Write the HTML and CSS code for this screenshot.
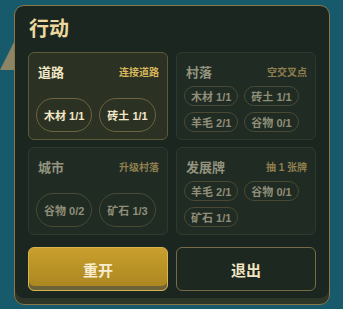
FILE: index.html
```html
<!DOCTYPE html>
<html lang="zh">
<head>
    <meta charset="UTF-8">
    <meta name="viewport" content="width=device-width, initial-scale=1.0">
    <title>行动</title>
    <link rel="stylesheet" href="styles.css">
</head>
<body>
    <div class="map-bit"></div>
    <div class="panel">
        <h1 class="title">行动</h1>
        <div class="grid">
            <div class="card active">
                <div class="card-head">
                    <span class="card-name">道路</span>
                    <span class="card-note">连接道路</span>
                </div>
                <div class="chips big">
                    <span class="chip">木材 1/1</span>
                    <span class="chip">砖土 1/1</span>
                </div>
            </div>
            <div class="card dim">
                <div class="card-head">
                    <span class="card-name">村落</span>
                    <span class="card-note">空交叉点</span>
                </div>
                <div class="chips">
                    <span class="chip">木材 1/1</span>
                    <span class="chip">砖土 1/1</span>
                    <span class="chip">羊毛 2/1</span>
                    <span class="chip">谷物 0/1</span>
                </div>
            </div>
            <div class="card dim">
                <div class="card-head">
                    <span class="card-name">城市</span>
                    <span class="card-note">升级村落</span>
                </div>
                <div class="chips big">
                    <span class="chip">谷物 0/2</span>
                    <span class="chip">矿石 1/3</span>
                </div>
            </div>
            <div class="card dim">
                <div class="card-head">
                    <span class="card-name">发展牌</span>
                    <span class="card-note">抽 1 张牌</span>
                </div>
                <div class="chips">
                    <span class="chip">羊毛 2/1</span>
                    <span class="chip">谷物 0/1</span>
                    <span class="chip">矿石 1/1</span>
                </div>
            </div>
        </div>
        <div class="buttons">
            <button class="btn gold">重开</button>
            <button class="btn dark">退出</button>
        </div>
    </div>
</body>
</html>
```

FILE: styles.css
```css
body {
    margin: 0;
    width: 343px;
    height: 309px;
    overflow: hidden;
    background-color: #165a6b;
    font-family: "Liberation Sans", "Noto Sans CJK SC", sans-serif;
    position: relative;
}
.map-bit {
    position: absolute;
    left: 0;
    top: 40px;
    width: 0;
    height: 0;
    border-right: 15px solid #8c8464;
    border-top: 30px solid transparent;
}
.panel {
    position: relative;
    margin: 5px 0 0 14px;
    width: 316px;
    height: 300px;
    box-sizing: border-box;
    border: 1px solid #8a7848;
    border-radius: 10px;
    background-color: #1b2620;
    box-shadow: inset 0 -6px 0 #2e3629;
    padding: 10px 13px 13px 13px;
}
.title {
    margin: 0 0 10px 1px;
    font-size: 20px;
    line-height: 26px;
    font-weight: bold;
    color: #ecd89e;
}
.grid {
    display: grid;
    grid-template-columns: 140px 140px;
    grid-template-rows: 88px 88px;
    column-gap: 8px;
    row-gap: 7px;
}
.card {
    box-sizing: border-box;
    border-radius: 6px;
    padding: 7px 7px 7px 6px;
    display: flex;
    flex-direction: column;
}
.card.active {
    background-color: #2b3224;
    border: 1px solid #5f5a3c;
}
.card.dim {
    background-color: #1f2b23;
    border: 1px solid #2f3a2e;
}
.card-head {
    display: flex;
    justify-content: space-between;
    align-items: center;
    padding: 2px 1px 0 3px;
    height: 18px;
}
.card-name {
    font-size: 13px;
    font-weight: bold;
    color: #f1e6c6;
}
.card-note {
    font-size: 10px;
    font-weight: bold;
    color: #d9b75a;
}
.dim .card-name {
    color: #94947e;
}
.dim .card-note {
    color: #8f7e4e;
}
.chips {
    display: flex;
    flex-wrap: wrap;
    gap: 6px 6px;
    margin-top: 6px;
    padding-left: 1px;
}
.chips.big {
    margin-top: auto;
    gap: 7px;
}
.chip {
    display: flex;
    align-items: center;
    justify-content: center;
    box-sizing: border-box;
    height: 20px;
    padding: 0 6px;
    border-radius: 10px;
    border: 1px solid #4a4a34;
    font-size: 11px;
    font-weight: bold;
    color: #908e78;
    white-space: nowrap;
}
.big .chip {
    height: 34px;
    border-radius: 17px;
    padding: 0 7px;
}
.active .chip {
    border-color: #6e6340;
    color: #f3e8c8;
}
.buttons {
    display: flex;
    gap: 8px;
    margin-top: 12px;
}
.btn {
    width: 140px;
    height: 44px;
    border-radius: 6px;
    font-family: "Liberation Sans", "Noto Sans CJK SC", sans-serif;
    font-size: 15px;
    font-weight: bold;
    cursor: pointer;
}
.btn.gold {
    background: linear-gradient(#c9a02e, #a9841f);
    border: 1px solid #d6b450;
    color: #f7edd2;
    box-shadow: inset 0 -4px 0 #6e6238;
}
.btn.dark {
    background-color: #1c2820;
    border: 1px solid #776a46;
    color: #f1e4c0;
}
```
